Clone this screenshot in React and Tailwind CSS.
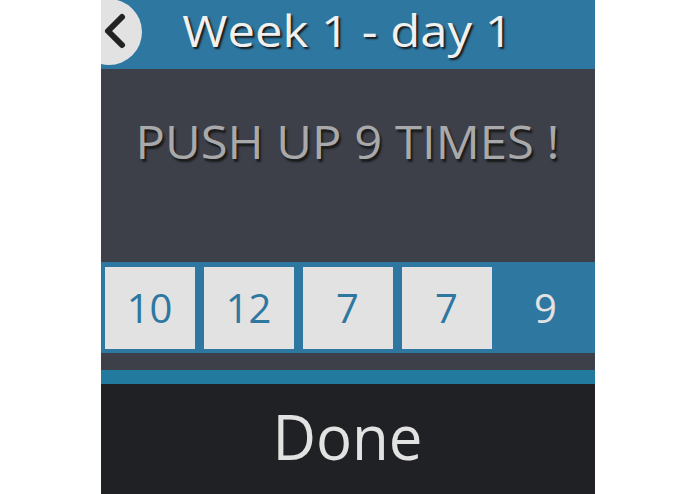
import React from "react";

const font = { fontFamily: '"Open Sans", "Noto Sans", sans-serif' };

export default function App() {
  const reps = [10, 12, 7, 7];
  return (
    <div className="w-[695px] h-[494px] bg-white flex justify-center" style={font}>
      <div className="w-[494px] h-[494px] flex flex-col overflow-hidden">
        <div className="relative h-[69px] bg-[#2e77a0] flex items-center justify-center pb-[9px]">
          <div className="absolute left-[-25px] top-[-1px] w-[66px] h-[66px] rounded-full bg-[#e2e2e2]">
            <svg width="66" height="66" viewBox="0 0 66 66">
              <path d="M46 18 L32 32 L46 46" fill="none" stroke="#222" strokeWidth="6" strokeLinecap="round" strokeLinejoin="round" />
            </svg>
          </div>
          <span className="text-[49px] leading-none text-[#f0f0f0] scale-y-[0.88] [text-shadow:2px_3px_2px_#1a1a1a]">Week 1 - day 1</span>
        </div>
        <div className="h-[193px] bg-[#3d4049] flex items-center justify-center pb-[48px]">
          <span className="text-[49px] leading-none text-[#a9a9ab] scale-y-[0.95] [text-shadow:2px_3px_2px_#1a1a1a]">PUSH UP 9 TIMES !</span>
        </div>
        <div className="h-[91px] bg-[#2e77a0] flex items-center gap-[9px] px-[4px]">
          {reps.map((r, i) => (
            <div key={i} className="w-[90px] h-[82px] bg-[#e2e2e2] flex items-center justify-center text-[40px] text-[#2e77a0]">
              {r}
            </div>
          ))}
          <div className="w-[90px] h-[82px] flex items-center justify-center text-[40px] text-[#e2e2e2]">9</div>
        </div>
        <div className="h-[17px] bg-[#3d4049]" />
        <div className="h-[14px] bg-[#237a9f]" />
        <div className="flex-1 bg-[#202125] flex items-center justify-center pb-[7px]">
          <span className="text-[60px] leading-none text-[#e2e2e2] scale-y-[1.05]">Done</span>
        </div>
      </div>
    </div>
  );
}
